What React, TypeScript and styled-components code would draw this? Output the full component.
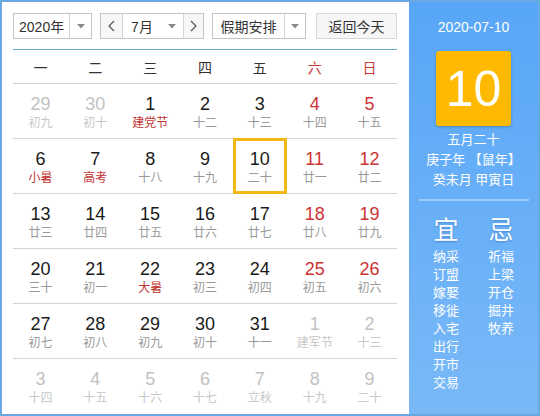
import React from 'react';
import styled, { createGlobalStyle } from 'styled-components';

const GlobalStyle = createGlobalStyle`
  html, body {
    margin: 0;
    padding: 0;
    background: #ffffff;
  }
  body {
    font-family: "Liberation Sans", "Noto Sans CJK SC", sans-serif;
  }
`;

const Frame = styled.div`
  display: flex;
  width: 540px;
  height: 416px;
  box-sizing: border-box;
  border: 2px solid #6aa8e2;
  background: #ffffff;
`;

const Main = styled.div`
  width: 407px;
  box-sizing: border-box;
  padding: 11px 12px 0 11px;
  display: flex;
  flex-direction: column;
`;

const Toolbar = styled.div`
  display: flex;
  align-items: flex-start;
  height: 36px;
  border-bottom: 1px solid #69aedb;
`;

const Control = styled.div<{ $width: number; $gap?: number }>`
  display: flex;
  width: ${({ $width }) => $width}px;
  height: 26px;
  box-sizing: border-box;
  margin-right: ${({ $gap }) => $gap ?? 0}px;
  border: 1px solid #c4c4c4;
  background: #ffffff;
  font-size: 14px;
  color: #333;
`;

const ControlText = styled.div<{ $width: number }>`
  display: flex;
  align-items: center;
  justify-content: center;
  width: ${({ $width }) => $width}px;
  height: 100%;
`;

const ArrowCell = styled.div<{ $width: number; $left?: boolean }>`
  display: flex;
  align-items: center;
  justify-content: center;
  width: ${({ $width }) => $width}px;
  height: 100%;
  box-sizing: border-box;
  border-left: ${({ $left }) => ($left ? '1px solid #d4d4d4' : 'none')};
`;

const NavButton = styled.div<{ $side: 'left' | 'right' }>`
  display: flex;
  align-items: center;
  justify-content: center;
  width: ${({ $side }) => ($side === 'left' ? 22 : 20)}px;
  height: 100%;
  background: #f7f7f7;
  box-sizing: border-box;
  ${({ $side }) => ($side === 'left' ? 'border-right: 1px solid #d4d4d4;' : 'border-left: 1px solid #d4d4d4;')}
`;

const TodayButton = styled.div`
  display: flex;
  align-items: center;
  justify-content: center;
  width: 81px;
  height: 26px;
  box-sizing: border-box;
  border: 1px solid #d8d8d8;
  background: #f6f6f6;
  font-size: 14px;
  color: #333;
`;

const WeekHeader = styled.div`
  display: grid;
  grid-template-columns: repeat(7, 1fr);
  height: 33px;
  border-bottom: 1px solid #cfcfcf;
`;

const WeekDay = styled.div<{ $weekend: boolean }>`
  display: flex;
  align-items: center;
  justify-content: center;
  font-size: 14px;
  color: ${({ $weekend }) => ($weekend ? '#c8383a' : '#333')};
`;

const Grid = styled.div`
  display: grid;
  grid-template-columns: repeat(7, 1fr);
  grid-auto-rows: 55px;
`;

const Cell = styled.div<{ $last: boolean; $selected: boolean }>`
  position: relative;
  display: flex;
  flex-direction: column;
  align-items: center;
  box-sizing: border-box;
  padding-top: 9px;
  border-bottom: ${({ $last }) => ($last ? 'none' : '1px solid #d4d4d4')};

  ${({ $selected }) =>
    $selected &&
    `
    &::after {
      content: '';
      position: absolute;
      left: 1px;
      right: 0;
      top: -1px;
      bottom: -1px;
      border: 3px solid #f4b816;
    }
  `}
`;

const DayNum = styled.div<{ $tone: 'normal' | 'weekend' | 'other' }>`
  font-size: 18px;
  line-height: 22px;
  color: ${({ $tone }) => ($tone === 'other' ? '#c2c2c2' : $tone === 'weekend' ? '#cc3333' : '#1a1a1a')};
`;

const Lunar = styled.div<{ $tone: 'normal' | 'festival' | 'other' }>`
  font-size: 12px;
  line-height: 16px;
  color: ${({ $tone }) => ($tone === 'other' ? '#c8c8c8' : $tone === 'festival' ? '#c0332f' : '#999')};
`;

const Side = styled.div`
  flex: 1;
  display: flex;
  flex-direction: column;
  align-items: center;
  background: linear-gradient(to bottom, #58a6f8, #79b9f7);
  color: #ffffff;
`;

const SideDate = styled.div`
  margin-top: 15px;
  font-size: 14px;
  line-height: 20px;
`;

const DayBox = styled.div`
  display: flex;
  align-items: center;
  justify-content: center;
  width: 75px;
  height: 75px;
  margin-top: 14px;
  border-radius: 3px;
  background: #ffb900;
  box-shadow: 0 1px 3px rgba(0, 0, 0, 0.25);
  font-size: 50px;
  color: #ffffff;
`;

const LunarInfo = styled.div`
  margin-top: 4px;
  text-align: center;
  font-size: 13px;
  line-height: 20px;
`;

const Divider = styled.div`
  width: 110px;
  height: 2px;
  margin-top: 9px;
  background: rgba(255, 255, 255, 0.35);
`;

const Advice = styled.div`
  display: grid;
  grid-template-columns: 55px 55px;
  margin-top: 14px;
`;

const AdviceCol = styled.div`
  display: flex;
  flex-direction: column;
  align-items: center;
`;

const AdviceTitle = styled.div`
  font-size: 25px;
  line-height: 30px;
  margin-bottom: 3px;
  text-shadow: 0 1px 2px rgba(0, 60, 140, 0.35);
`;

const AdviceItem = styled.div`
  font-size: 13px;
  line-height: 18px;
`;

const Caret = () => (
  <svg width="8" height="5" viewBox="0 0 8 5">
    <polygon points="0,0 8,0 4,4.5" fill="#8a8a8a" />
  </svg>
);

const Chevron = ({ dir }: { dir: 'left' | 'right' }) => (
  <svg width="7" height="12" viewBox="0 0 7 12">
    <polyline
      points={dir === 'left' ? '6,1 1,6 6,11' : '1,1 6,6 1,11'}
      fill="none"
      stroke="#555"
      strokeWidth="1.2"
    />
  </svg>
);

type Day = {
  n: number;
  lunar: string;
  other?: boolean;
  fest?: boolean;
  sel?: boolean;
};

const days: Day[] = [
  { n: 29, lunar: '初九', other: true },
  { n: 30, lunar: '初十', other: true },
  { n: 1, lunar: '建党节', fest: true },
  { n: 2, lunar: '十二' },
  { n: 3, lunar: '十三' },
  { n: 4, lunar: '十四' },
  { n: 5, lunar: '十五' },
  { n: 6, lunar: '小暑', fest: true },
  { n: 7, lunar: '高考', fest: true },
  { n: 8, lunar: '十八' },
  { n: 9, lunar: '十九' },
  { n: 10, lunar: '二十', sel: true },
  { n: 11, lunar: '廿一' },
  { n: 12, lunar: '廿二' },
  { n: 13, lunar: '廿三' },
  { n: 14, lunar: '廿四' },
  { n: 15, lunar: '廿五' },
  { n: 16, lunar: '廿六' },
  { n: 17, lunar: '廿七' },
  { n: 18, lunar: '廿八' },
  { n: 19, lunar: '廿九' },
  { n: 20, lunar: '三十' },
  { n: 21, lunar: '初一' },
  { n: 22, lunar: '大暑', fest: true },
  { n: 23, lunar: '初三' },
  { n: 24, lunar: '初四' },
  { n: 25, lunar: '初五' },
  { n: 26, lunar: '初六' },
  { n: 27, lunar: '初七' },
  { n: 28, lunar: '初八' },
  { n: 29, lunar: '初九' },
  { n: 30, lunar: '初十' },
  { n: 31, lunar: '十一' },
  { n: 1, lunar: '建军节', other: true },
  { n: 2, lunar: '十三', other: true },
  { n: 3, lunar: '十四', other: true },
  { n: 4, lunar: '十五', other: true },
  { n: 5, lunar: '十六', other: true },
  { n: 6, lunar: '十七', other: true },
  { n: 7, lunar: '立秋', other: true },
  { n: 8, lunar: '十九', other: true },
  { n: 9, lunar: '二十', other: true },
];

const weekDays = ['一', '二', '三', '四', '五', '六', '日'];
const good = ['纳采', '订盟', '嫁娶', '移徙', '入宅', '出行', '开市', '交易'];
const bad = ['祈福', '上梁', '开仓', '掘井', '牧养'];

const App = () => {
  return (
    <>
      <GlobalStyle />
      <Frame>
        <Main>
          <Toolbar>
            <Control $width={79} $gap={8}>
              <ControlText $width={56}>2020年</ControlText>
              <ArrowCell $width={22} $left>
                <Caret />
              </ArrowCell>
            </Control>
            <Control $width={104} $gap={8}>
              <NavButton $side="left">
                <Chevron dir="left" />
              </NavButton>
              <ControlText $width={38}>7月</ControlText>
              <ArrowCell $width={22}>
                <Caret />
              </ArrowCell>
              <NavButton $side="right">
                <Chevron dir="right" />
              </NavButton>
            </Control>
            <Control $width={94} $gap={10}>
              <ControlText $width={71}>假期安排</ControlText>
              <ArrowCell $width={21} $left>
                <Caret />
              </ArrowCell>
            </Control>
            <TodayButton>返回今天</TodayButton>
          </Toolbar>

          <WeekHeader>
            {weekDays.map((w, i) => (
              <WeekDay key={w} $weekend={i >= 5}>
                {w}
              </WeekDay>
            ))}
          </WeekHeader>

          <Grid>
            {days.map((d, i) => {
              const weekend = i % 7 >= 5;
              const numTone = d.other ? 'other' : weekend ? 'weekend' : 'normal';
              const lunarTone = d.other ? 'other' : d.fest ? 'festival' : 'normal';
              return (
                <Cell key={i} $last={i >= 35} $selected={!!d.sel}>
                  <DayNum $tone={numTone}>{d.n}</DayNum>
                  <Lunar $tone={lunarTone}>{d.lunar}</Lunar>
                </Cell>
              );
            })}
          </Grid>
        </Main>

        <Side>
          <SideDate>2020-07-10</SideDate>
          <DayBox>10</DayBox>
          <LunarInfo>
            <div>五月二十</div>
            <div>庚子年 【鼠年】</div>
            <div>癸未月 甲寅日</div>
          </LunarInfo>
          <Divider />
          <Advice>
            <AdviceCol>
              <AdviceTitle>宜</AdviceTitle>
              {good.map((g) => (
                <AdviceItem key={g}>{g}</AdviceItem>
              ))}
            </AdviceCol>
            <AdviceCol>
              <AdviceTitle>忌</AdviceTitle>
              {bad.map((b) => (
                <AdviceItem key={b}>{b}</AdviceItem>
              ))}
            </AdviceCol>
          </Advice>
        </Side>
      </Frame>
    </>
  );
};

export default App;
